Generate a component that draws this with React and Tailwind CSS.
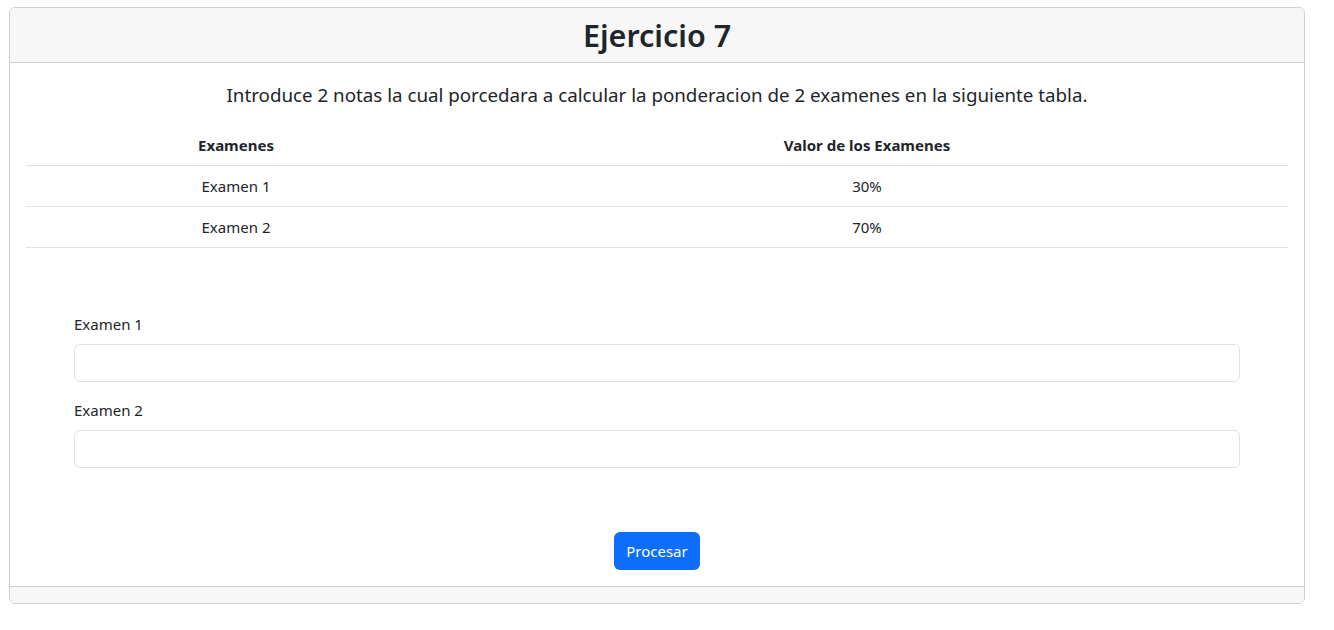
import React from 'react';

const font = { fontFamily: '"Noto Sans", "Liberation Sans", sans-serif' };

const App = () => {
    return (
        <div className="min-h-screen bg-white text-[#212529]" style={font}>
            <div className="pt-[7px] pl-[9px]">
                <div className="w-[1296px] border border-[#cfcfcf] rounded-[6px] overflow-hidden">

                    {/* Header */}
                    <div className="bg-[#f7f7f7] border-b border-[#cfcfcf] px-4 py-2 text-center">
                        <h2 className="text-[30.5px] font-semibold leading-[38px]">Ejercicio 7</h2>
                    </div>

                    {/* Body */}
                    <div className="p-4 bg-white">
                        <p className="text-[18.75px] leading-[30px] text-center pt-[1px] mb-[15px]">
                            Introduce 2 notas la cual porcedara a calcular la ponderacion de 2 examenes en la siguiente tabla.
                        </p>

                        <table className="w-full mb-4 text-[15px] text-center border-collapse">
                            <thead>
                                <tr className="border-b border-[#dee2e6]">
                                    <th className="w-[420px] p-2 font-bold leading-6">Examenes</th>
                                    <th className="p-2 font-bold leading-6">Valor de los Examenes</th>
                                </tr>
                            </thead>
                            <tbody>
                                <tr className="border-b border-[#dee2e6]">
                                    <td className="p-2 leading-6">Examen 1</td>
                                    <td className="p-2 leading-6">30%</td>
                                </tr>
                                <tr className="border-b border-[#dee2e6]">
                                    <td className="p-2 leading-6">Examen 2</td>
                                    <td className="p-2 leading-6">70%</td>
                                </tr>
                            </tbody>
                        </table>

                        <form className="mx-12 pt-[48px]" onSubmit={(e) => e.preventDefault()}>
                            <div className="mb-4">
                                <label className="block mb-2 text-[15px] leading-6">Examen 1</label>
                                <input type="text" className="block w-full h-[38px] px-3 border border-[#dee2e6] rounded-[6px] outline-none" />
                            </div>
                            <div>
                                <label className="block mb-2 text-[15px] leading-6">Examen 2</label>
                                <input type="text" className="block w-full h-[38px] px-3 border border-[#dee2e6] rounded-[6px] outline-none" />
                            </div>
                            <div className="flex justify-center mt-16">
                                <button type="submit" className="h-[38px] px-3 bg-[#0d6efd] text-white text-[15px] leading-6 rounded-[6px]">
                                    Procesar
                                </button>
                            </div>
                        </form>
                    </div>

                    {/* Footer */}
                    <div className="bg-[#f7f7f7] border-t border-[#cfcfcf] h-[17px]"></div>
                </div>
            </div>
        </div>
    );
};

export default App;
